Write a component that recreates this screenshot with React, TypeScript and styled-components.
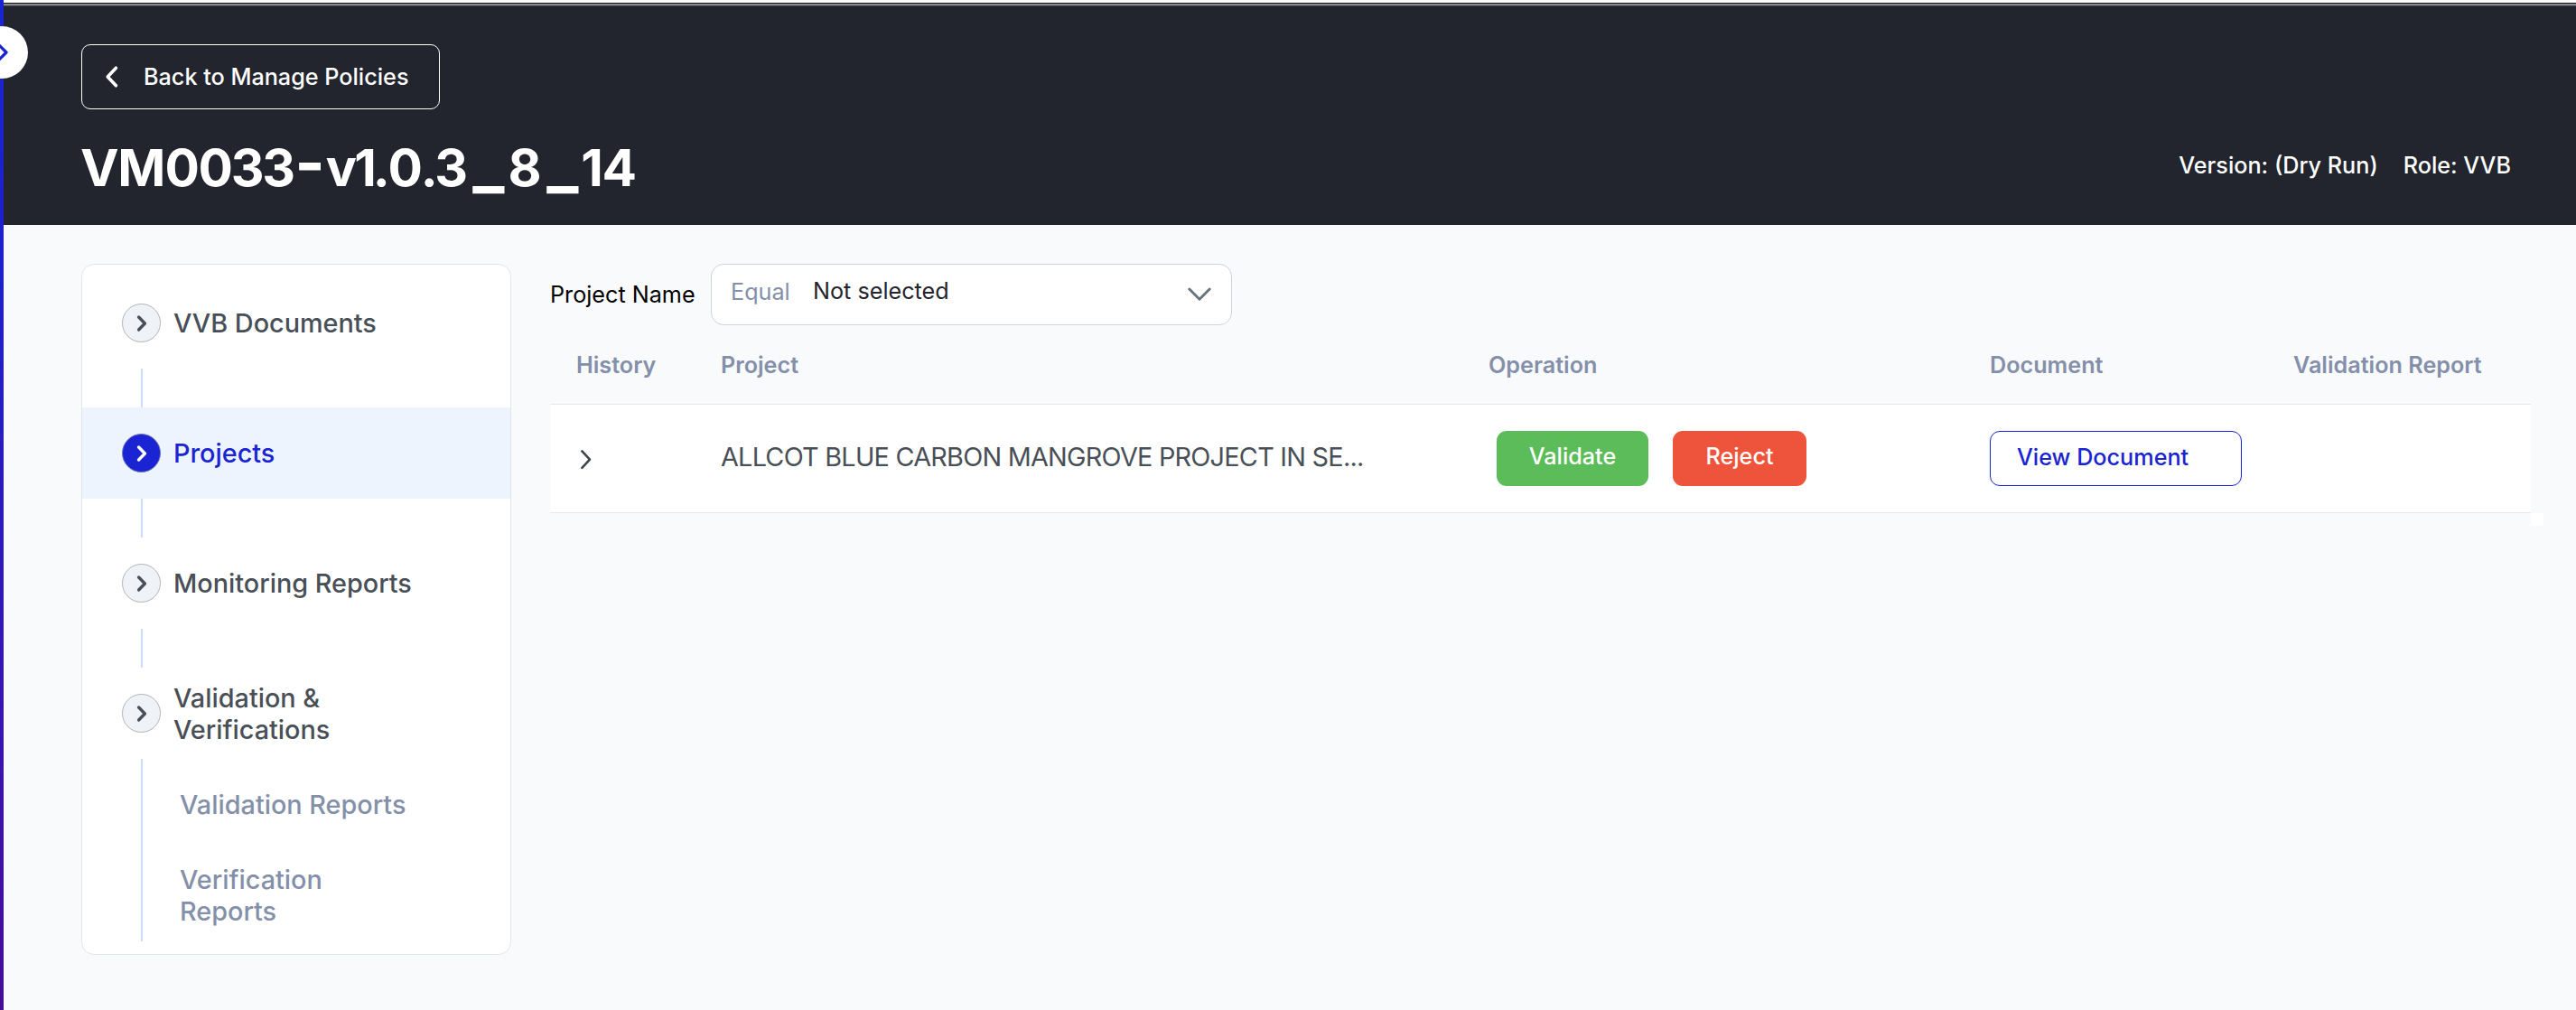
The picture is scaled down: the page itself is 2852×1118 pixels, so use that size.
import React from "react";
import styled, { createGlobalStyle, css } from "styled-components";

const GlobalStyle = createGlobalStyle`
  *, *::before, *::after { box-sizing: border-box; }
  html, body { margin: 0; padding: 0; overflow: hidden; }
  body {
    background: #f9fafc;
    font-family: Inter, "Liberation Sans", sans-serif;
    font-size: 25.2px;
    line-height: 30.5px;
    -webkit-font-smoothing: antialiased;
  }
`;

const Shell = styled.div`
  display: flex;
  height: 1118px;
  overflow: hidden;
  position: relative;
`;

const Rail = styled.div`
  flex: 0 0 4px;
  background: linear-gradient(180deg, #1a24d2 0%, #1e20cc 26%, #2d1abc 50%, #3b13ae 76%, #460c98 100%);
`;

const RailToggle = styled.button`
  position: absolute;
  left: -27px;
  top: 29px;
  width: 58px;
  height: 58px;
  padding: 0;
  border: 0;
  border-radius: 50%;
  background: #fff;
  display: flex;
  align-items: center;
  justify-content: center;
`;

const Page = styled.div`
  flex: 1;
  min-width: 0;
  display: flex;
  flex-direction: column;
`;

const TopEdge = styled.div`
  flex: none;
  height: 7px;
  background: linear-gradient(
    180deg,
    #fdfdfd 0 3px,
    #0c0e10 3px 4px,
    #8a8f91 4px 5px,
    #868a8d 5px 6px,
    #45494e 6px 7px
  );
`;

const Header = styled.header`
  flex: none;
  height: 242px;
  padding: 42px 72px 0 86px;
  background: #23252e;
  color: #fff;
  display: flex;
  flex-direction: column;
  align-items: flex-start;
`;

const BackButton = styled.button`
  height: 72px;
  width: 397px;
  padding: 0 0 0 25px;
  border: 1px solid #fff;
  border-radius: 10px;
  background: transparent;
  color: #fff;
  font: inherit;
  font-weight: 500;
  display: flex;
  align-items: center;
  gap: 28px;
  white-space: nowrap;
`;

const TitleRow = styled.div`
  align-self: stretch;
  display: flex;
  justify-content: space-between;
  align-items: flex-start;
  margin-top: 30px;
`;

const Title = styled.h1`
  margin: 0 0 0 -1px;
  font-size: 57px;
  line-height: 69px;
  font-weight: 700;
  font-kerning: none;
  white-space: nowrap;
`;

const Piece = styled.span<{ $track: number; $size?: number }>`
  letter-spacing: ${(p) => p.$track}px;
  font-size: ${(p) => p.$size ?? 57}px;
  line-height: 0;
`;

const Meta = styled.div`
  display: flex;
  gap: 28px;
  margin-top: 17px;
  font-weight: 500;
  white-space: nowrap;
`;

const Body = styled.div`
  flex: 1;
  display: flex;
  align-items: flex-start;
  padding: 43px 50px 0 86px;
  gap: 43px;
`;

const Steps = styled.nav`
  flex: 0 0 476px;
  height: 765px;
  padding: 14px 0;
  background: #fff;
  border: 1px solid #e1e6ed;
  border-radius: 14px;
  font-size: 28.8px;
  line-height: 35px;
  font-weight: 500;
`;

const Step = styled.div<{ $active?: boolean }>`
  height: 101px;
  padding-left: 44px;
  display: flex;
  align-items: center;
  gap: 14px;
  color: ${(p) => (p.$active ? "#1a24d2" : "#494f57")};
  background: ${(p) => (p.$active ? "#eef4fe" : "transparent")};
`;

const StepLabel = styled.span`
  width: 268px;
`;

const Dot = styled.span<{ $active?: boolean }>`
  flex: none;
  width: 43px;
  height: 43px;
  border-radius: 50%;
  border: 1px solid #b0b5bb;
  background: #eff2f7;
  display: flex;
  align-items: center;
  justify-content: center;
  ${(p) =>
    p.$active &&
    css`
      border-color: #6f76b8;
      background: #1a24d2;
    `}
`;

const Connector = styled.div`
  width: 2px;
  height: 43px;
  margin-left: 65px;
  background: #cddafb;
`;

const SubSteps = styled.div`
  margin-left: 65px;
  height: 202px;
  padding: 33px 0 0 41px;
  border-left: 2px solid #cddafb;
  display: flex;
  flex-direction: column;
  gap: 48px;
  color: #848fa9;
`;

const SubStep = styled.span`
  width: 256px;
`;

const Main = styled.main`
  flex: 1;
  min-width: 0;
`;

const Filter = styled.div`
  display: flex;
  align-items: center;
  height: 68px;
  color: #000;
`;

const FilterLabel = styled.label`
  width: 178px;
  white-space: nowrap;
`;

const Select = styled.div`
  width: 577px;
  height: 68px;
  border: 1px solid #cdd4dd;
  border-radius: 14px;
  background: #fff;
  display: flex;
  align-items: flex-start;
  padding: 0 22px 0 21px;
`;

const SelectMode = styled.span`
  margin-top: 15px;
  width: 91px;
  color: #848fa9;
`;

const SelectValue = styled.span`
  flex: 1;
  margin-top: 14px;
  color: #23252e;
`;

const SelectArrow = styled.span`
  display: flex;
  margin-top: 24px;
`;

const grid = css`
  display: grid;
  grid-template-columns: 161px 850px 555px 336px 291px;
`;

const HeadRow = styled.div`
  ${grid}
  width: 2193px;
  height: 87px;
  padding-top: 29px;
  color: #848fa9;
  font-weight: 600;
`;

const HeadCell = styled.div<{ $pad?: number }>`
  padding-left: ${(p) => p.$pad ?? 28}px;
  white-space: nowrap;
`;

const Row = styled.div`
  ${grid}
  width: 2193px;
  height: 121px;
  background: #fff;
  border-top: 1px solid #e6e9ec;
  border-bottom: 1px solid #e6e9ec;
  align-items: center;
`;

const Cell = styled.div<{ $pad?: number }>`
  padding-left: ${(p) => p.$pad ?? 28}px;
  display: flex;
  align-items: center;
`;

const ProjectName = styled.span`
  font-size: 28.8px;
  line-height: 35px;
  letter-spacing: -0.75px;
  color: #494f57;
  white-space: nowrap;
  padding-bottom: 5px;
`;

const Action = styled.button<{ $tone: string; $w: number }>`
  width: ${(p) => p.$w}px;
  height: 61px;
  padding: 0 0 5px;
  margin-right: 27px;
  border: 0;
  border-radius: 11px;
  background: ${(p) => p.$tone};
  color: #fff;
  font: inherit;
  font-weight: 500;
`;

const ViewButton = styled.button`
  width: 279px;
  height: 61px;
  padding: 0 0 3px 29px;
  border: 1px solid #1a24d2;
  border-radius: 11px;
  background: #fff;
  color: #1a24d2;
  font: inherit;
  font-weight: 500;
  text-align: left;
`;

const Corner = styled.div`
  width: 14px;
  height: 14px;
  margin-left: 2193px;
  background: #fff;
`;

type ChevronProps = { w: number; h: number; d: string; stroke: string; sw: number };

const Chevron = ({ w, h, d, stroke, sw }: ChevronProps) => (
  <svg width={w} height={h} viewBox={`0 0 ${w} ${h}`} fill="none" overflow="visible">
    <path d={d} stroke={stroke} strokeWidth={sw} strokeLinecap="round" strokeLinejoin="round" />
  </svg>
);

const titlePieces: { text: string; track: number; size?: number }[] = [
  { text: "V", track: -1.3 },
  { text: "M", track: -0.9 },
  { text: "0", track: -1.4 },
  { text: "03", track: -2.25 },
  { text: "3", track: -0.8 },
  { text: "-", track: 0.8, size: 72 },
  { text: "v", track: -2.7 },
  { text: "1", track: -4.1 },
  { text: ".0", track: -2.2 },
  { text: ".", track: -3.5 },
  { text: "3", track: 5 },
  { text: "_", track: 4.2, size: 74 },
  { text: "8", track: 5.5 },
  { text: "_", track: 2.7, size: 74 },
  { text: "1", track: -1.1 },
  { text: "4", track: 0 },
];

const StepDot = ({ active }: { active?: boolean }) => (
  <Dot $active={active}>
    <Chevron w={12} h={18} d="M2.6 2 L9.4 9 L2.6 16" stroke={active ? "#fff" : "#494f57"} sw={3.4} />
  </Dot>
);

export default function App() {
  return (
    <>
      <GlobalStyle />
      <Shell>
        <Rail />
        <Page>
          <TopEdge />
          <Header>
            <BackButton>
              <Chevron w={15} h={24} d="M12.4 2.2 L3.2 12 L12.4 21.8" stroke="#fff" sw={3.6} />
              Back to Manage Policies
            </BackButton>
            <TitleRow>
              <Title>
                {titlePieces.map((p, i) => (
                  <Piece key={i} $track={p.track} $size={p.size}>
                    {p.text}
                  </Piece>
                ))}
              </Title>
              <Meta>
                <span>Version: (Dry Run)</span>
                <span>Role: VVB</span>
              </Meta>
            </TitleRow>
          </Header>
          <Body>
            <Steps>
              <Step>
                <StepDot />
                <StepLabel>VVB Documents</StepLabel>
              </Step>
              <Connector />
              <Step $active>
                <StepDot active />
                <StepLabel>Projects</StepLabel>
              </Step>
              <Connector />
              <Step>
                <StepDot />
                <StepLabel>Monitoring Reports</StepLabel>
              </Step>
              <Connector />
              <Step>
                <StepDot />
                <StepLabel>Validation &amp; Verifications</StepLabel>
              </Step>
              <SubSteps>
                <SubStep>Validation Reports</SubStep>
                <SubStep>Verification Reports</SubStep>
              </SubSteps>
            </Steps>
            <Main>
              <Filter>
                <FilterLabel>Project Name</FilterLabel>
                <Select>
                  <SelectMode>Equal</SelectMode>
                  <SelectValue>Not selected</SelectValue>
                  <SelectArrow>
                    <Chevron w={26} h={18} d="M1.8 3 L13 14.2 L24.2 3" stroke="#6c757d" sw={3} />
                  </SelectArrow>
                </Select>
              </Filter>
              <HeadRow>
                <HeadCell $pad={29}>History</HeadCell>
                <HeadCell>Project</HeadCell>
                <HeadCell>Operation</HeadCell>
                <HeadCell>Document</HeadCell>
                <HeadCell>Validation Report</HeadCell>
              </HeadRow>
              <Row>
                <Cell $pad={33}>
                  <Chevron w={14} h={22} d="M2.4 2.4 L11 11.6 L2.4 20.8" stroke="#3f454c" sw={2.6} />
                </Cell>
                <Cell>
                  <ProjectName>ALLCOT BLUE CARBON MANGROVE PROJECT IN SE...</ProjectName>
                </Cell>
                <Cell $pad={37}>
                  <Action $tone="#5bbc59" $w={168}>Validate</Action>
                  <Action $tone="#ed543b" $w={148}>Reject</Action>
                </Cell>
                <Cell>
                  <ViewButton>View Document</ViewButton>
                </Cell>
                <Cell />
              </Row>
              <Corner />
            </Main>
          </Body>
        </Page>
        <RailToggle aria-label="Expand menu">
          <Chevron w={16} h={22} d="M4 2 L13 11 L4 20" stroke="#1a24d2" sw={3.2} />
        </RailToggle>
      </Shell>
    </>
  );
}
